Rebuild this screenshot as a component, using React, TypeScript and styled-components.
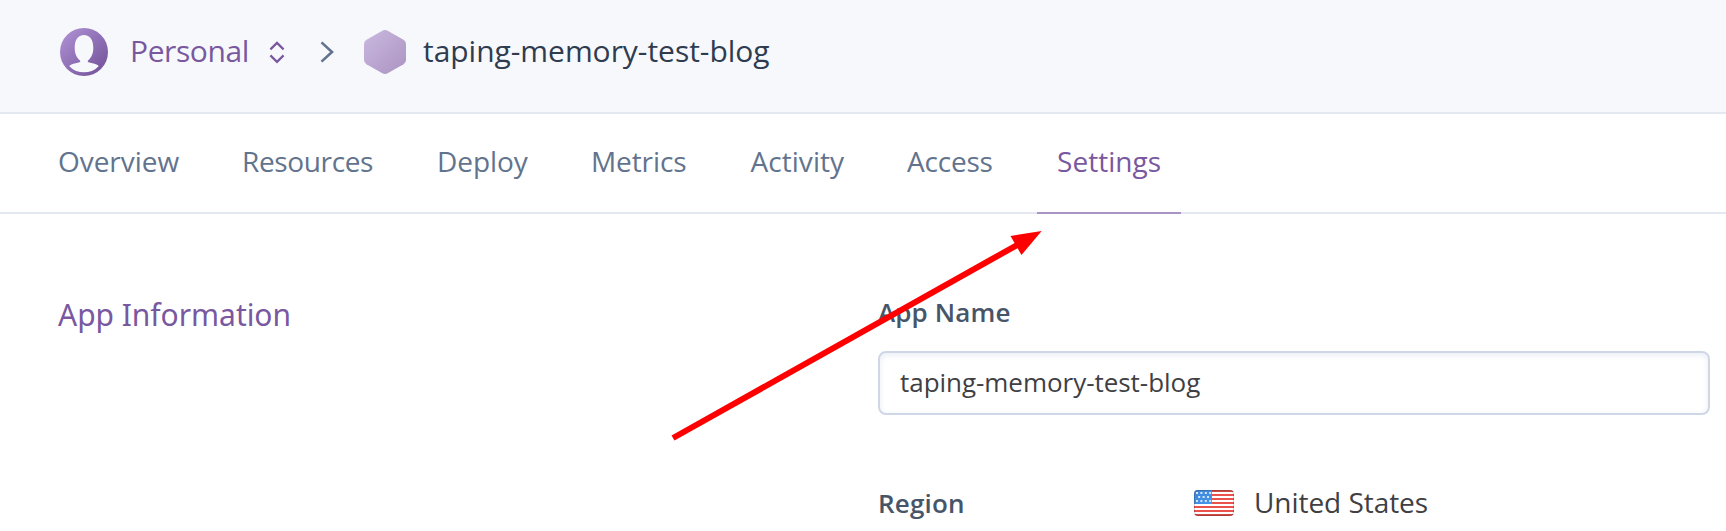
import React from 'react';
import styled, { createGlobalStyle } from 'styled-components';

const GlobalStyle = createGlobalStyle`
  * { box-sizing: border-box; }
  html, body { margin: 0; background: #fff; overflow: hidden; }
  body { font-family: "Open Sans", "Noto Sans", sans-serif; color: #3f3f44; }
`;

const Page = styled.div`
  position: relative;
  width: 1726px;
  height: 531px;
  overflow: hidden;
  background: #fff;
`;

const Header = styled.header`
  display: flex;
  align-items: center;
  height: 114px;
  padding: 0 60px 8px;
  background: #f7f8fc;
  border-bottom: 2px solid #e3e8f1;
`;

const Crumb = styled.span<{ $color: string; $tracking: number; $width: number; $left: number }>`
  flex: none;
  width: ${p => p.$width}px;
  margin-left: ${p => p.$left}px;
  padding-bottom: 3px;
  font-size: 30px;
  line-height: 40px;
  white-space: nowrap;
  color: ${p => p.$color};
  letter-spacing: ${p => p.$tracking}px;
`;

const Icon = styled.svg<{ $left?: number }>`
  display: block;
  flex: none;
  margin-left: ${p => p.$left ?? 0}px;
`;

const Tabs = styled.nav`
  display: flex;
  gap: 24px;
  height: 100px;
  padding-left: 38px;
  border-bottom: 2px solid #e3e8f1;
`;

const Tab = styled.a<{ $width: number; $tracking: number; $active?: boolean }>`
  flex: none;
  width: ${p => p.$width + 40}px;
  height: 100px;
  padding: 0 20px;
  font-size: 28px;
  line-height: 94px;
  white-space: nowrap;
  letter-spacing: ${p => p.$tracking}px;
  color: ${p => (p.$active ? '#79589f' : '#62738d')};
  border-bottom: 2px solid ${p => (p.$active ? '#a893c4' : 'transparent')};
`;

const Content = styled.main`
  display: grid;
  grid-template-columns: 820px 832px;
  padding: 80px 0 0 58px;
`;

const SectionTitle = styled.h2`
  margin: 0;
  padding-top: 1px;
  font: 400 30px/40px "Noto Sans", sans-serif;
  letter-spacing: -0.04px;
  color: #79589f;
`;

const Label = styled.label<{ $tracking?: number }>`
  display: block;
  font-size: 26px;
  font-weight: 600;
  line-height: 36px;
  letter-spacing: ${p => p.$tracking ?? 0.12}px;
  color: #475569;
`;

const Input = styled.input`
  display: block;
  width: 832px;
  height: 64px;
  margin-top: 21px;
  padding: 0 20px 3px;
  font: 400 26px/36px "Open Sans", sans-serif;
  letter-spacing: -0.04px;
  color: #3f3f44;
  background: #fff;
  border: 2px solid #cfd7e6;
  border-radius: 8px;
  box-shadow: inset 0 2px 6px #e9edf5;
  outline: none;
`;

const RegionRow = styled.div`
  display: grid;
  grid-template-columns: 316px 1fr;
  align-items: center;
  height: 36px;
  margin-top: 69px;
`;

const RegionValue = styled.div`
  display: flex;
  align-items: center;
  gap: 20px;
  font-size: 28px;
  line-height: 36px;
`;

const RegionName = styled.span`
  padding-bottom: 2px;
  letter-spacing: -0.05px;
`;

const Annotation = styled.svg`
  position: absolute;
  left: 0;
  top: 0;
  pointer-events: none;
`;

const tabs = [
  { name: 'Overview', width: 120, tracking: -0.04 },
  { name: 'Resources', width: 131, tracking: -0.36 },
  { name: 'Deploy', width: 90, tracking: -0.05 },
  { name: 'Metrics', width: 95.5, tracking: -0.1 },
  { name: 'Activity', width: 92.5, tracking: 0.05 },
  { name: 'Access', width: 86, tracking: -0.2 },
  { name: 'Settings', width: 104, tracking: 0.05 },
];

const Avatar = () => (
  <Icon width="48" height="48" viewBox="0 0 48 48">
    <defs>
      <linearGradient id="avatar" x1="0" y1="0" x2="1" y2="1">
        <stop offset="0.1" stopColor="#ab8dd0" />
        <stop offset="0.85" stopColor="#79589f" />
      </linearGradient>
    </defs>
    <circle cx="24" cy="24" r="24" fill="url(#avatar)" />
    <path
      fill="#f7f8fc"
      d="M24 7C18 7 14.7 12 14.7 20c0 6 2 9.5 5 12.2.8.8.8 1.6-.3 2-3.6 1-6.8 1.3-9.4 3-.7.5-.6 1-.1 1.5C13.4 42.3 18.6 44.3 24 44.3s10.600-2 14.100-5.600c.5-.5.6-1-.1-1.500-2.600-1.700-5.800-2-9.400-3-1.100-.4-1.100-1.200-.3-2 3-2.700 5-6.200 5-12.200C33.300 12 30 7 24 7Z"
    />
  </Icon>
);

const Hexagon = () => (
  <Icon $left={28} width="42" height="44" viewBox="0 0 42 44">
    <defs>
      <linearGradient id="hexagon" x1="0" y1="0" x2="1" y2="1">
        <stop offset="0.1" stopColor="#c7b5dc" />
        <stop offset="0.9" stopColor="#ae97c4" />
      </linearGradient>
    </defs>
    <path
      fill="url(#hexagon)"
      d="M18.3.7Q21-.7 23.7.7L39.5 9.8Q42 11.3 42 14.1V30Q42 32.8 39.5 34.3L23.7 43.3Q21 44.7 18.3 43.3L2.5 34.3Q0 32.8 0 30V14.1Q0 11.3 2.5 9.8Z"
    />
  </Icon>
);

const stars = [
  [3, 3], [7.4, 3], [11.8, 3], [16.2, 3],
  [5.2, 7], [9.6, 7], [14, 7],
  [3, 11], [7.4, 11], [11.8, 11], [16.2, 11],
];

const Flag = () => (
  <Icon width="40" height="26" viewBox="0 0 40 26">
    <defs>
      <clipPath id="flag">
        <rect width="40" height="26" rx="4" />
      </clipPath>
      <linearGradient id="canton" x1="0" y1="0" x2="1" y2="1">
        <stop offset="0" stopColor="#3f83d4" />
        <stop offset="1" stopColor="#4598ee" />
      </linearGradient>
    </defs>
    <g clipPath="url(#flag)">
      <rect width="40" height="26" fill="#fff" />
      {[0, 4, 8, 12, 16, 20, 24].map(y => (
        <rect key={y} y={y} width="40" height="2" fill={y === 0 || y === 24 ? '#cf4b45' : '#e9534b'} />
      ))}
      <rect width="18" height="14" fill="url(#canton)" />
      {stars.map(([x, y]) => (
        <rect key={`${x}-${y}`} x={x - 1} y={y - 1} width="2" height="2" fill="#d5e7fb" />
      ))}
    </g>
    <rect x="0.5" y="0.5" width="39" height="25" rx="3.5" fill="none" stroke="#000" strokeOpacity="0.17" />
  </Icon>
);

export default function App() {
  return (
    <Page>
      <GlobalStyle />
      <Header>
        <Avatar />
        <Crumb $color="#79589f" $tracking={-0.4} $width={119} $left={22}>Personal</Crumb>
        <Icon $left={20} width="16" height="24" viewBox="0 0 16 24" fill="none" stroke="#79589f" strokeWidth="2.2">
          <path d="M1.4 9.4 8 2.900l6.600 6.500M1.400 15.400 8 21.900l6.600-6.500" />
        </Icon>
        <Icon $left={34} width="17" height="24" viewBox="0 0 17 24" fill="none" stroke="#62738d" strokeWidth="2.6">
          <path d="M2.500 2.400 13 12 2.500 21.600" />
        </Icon>
        <Hexagon />
        <Crumb $color="#2f3c50" $tracking={-0.04} $width={348} $left={17}>taping-memory-test-blog</Crumb>
      </Header>
      <Tabs>
        {tabs.map(t => (
          <Tab key={t.name} $width={t.width} $tracking={t.tracking} $active={t.name === 'Settings'}>
            {t.name}
          </Tab>
        ))}
      </Tabs>
      <Content>
        <SectionTitle>App Information</SectionTitle>
        <div>
          <Label htmlFor="app-name">App Name</Label>
          <Input id="app-name" defaultValue="taping-memory-test-blog" />
          <RegionRow>
            <Label as="span" $tracking={0.2}>Region</Label>
            <RegionValue>
              <Flag />
              <RegionName>United States</RegionName>
            </RegionValue>
          </RegionRow>
        </div>
      </Content>
      <Annotation width="1726" height="531" viewBox="0 0 1726 531">
        <path d="M673 438 1018 244.500" stroke="#f00" strokeWidth="6" />
        <path d="M1041.700 231 1010.500 236 1016 245.500 1021.500 255Z" fill="#f00" />
      </Annotation>
    </Page>
  );
}
